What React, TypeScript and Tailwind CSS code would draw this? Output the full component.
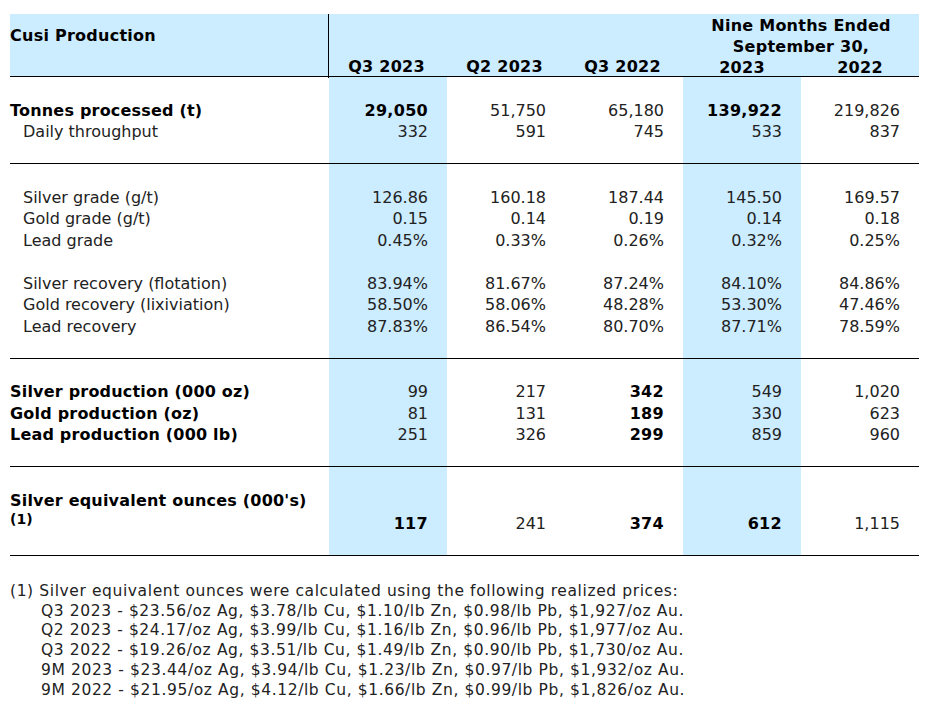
import React from "react";

type Row =
  | { kind: "blank" }
  | {
      kind: "data";
      label: string;
      bold?: boolean;
      indent?: boolean;
      vals: string[];
      boldIdx?: number[];
      note?: boolean;
    };

const B: Row = { kind: "blank" };

const sections: Row[][] = [
  [
    B,
    {
      kind: "data",
      label: "Tonnes processed (t)",
      bold: true,
      vals: ["29,050", "51,750", "65,180", "139,922", "219,826"],
      boldIdx: [0, 3],
    },
    { kind: "data", label: "Daily throughput", indent: true, vals: ["332", "591", "745", "533", "837"] },
    B,
  ],
  [
    B,
    { kind: "data", label: "Silver grade (g/t)", indent: true, vals: ["126.86", "160.18", "187.44", "145.50", "169.57"] },
    { kind: "data", label: "Gold grade (g/t)", indent: true, vals: ["0.15", "0.14", "0.19", "0.14", "0.18"] },
    { kind: "data", label: "Lead grade", indent: true, vals: ["0.45%", "0.33%", "0.26%", "0.32%", "0.25%"] },
    B,
    { kind: "data", label: "Silver recovery (flotation)", indent: true, vals: ["83.94%", "81.67%", "87.24%", "84.10%", "84.86%"] },
    { kind: "data", label: "Gold recovery (lixiviation)", indent: true, vals: ["58.50%", "58.06%", "48.28%", "53.30%", "47.46%"] },
    { kind: "data", label: "Lead recovery", indent: true, vals: ["87.83%", "86.54%", "80.70%", "87.71%", "78.59%"] },
    B,
  ],
  [
    B,
    { kind: "data", label: "Silver production (000 oz)", bold: true, vals: ["99", "217", "342", "549", "1,020"], boldIdx: [2] },
    { kind: "data", label: "Gold production (oz)", bold: true, vals: ["81", "131", "189", "330", "623"], boldIdx: [2] },
    { kind: "data", label: "Lead production (000 lb)", bold: true, vals: ["251", "326", "299", "859", "960"], boldIdx: [2] },
    B,
  ],
  [
    B,
    {
      kind: "data",
      label: "Silver equivalent ounces (000's)",
      bold: true,
      note: true,
      vals: ["117", "241", "374", "612", "1,115"],
      boldIdx: [0, 2, 3],
    },
    B,
  ],
];

const grid = "grid grid-cols-[319px_118px_118px_118px_118px_118px]";

function Cell({ idx, children, className = "" }: { idx: number; children?: React.ReactNode; className?: string }) {
  const blue = idx === 1 || idx === 4 ? "bg-[#ccecff]" : "";
  return <div className={`${blue} ${className}`}>{children}</div>;
}

function RowView({ row }: { row: Row }) {
  if (row.kind === "blank") {
    return (
      <div className={`${grid} h-[21.5px]`}>
        {[0, 1, 2, 3, 4, 5].map((i) => (
          <Cell key={i} idx={i} />
        ))}
      </div>
    );
  }
  return (
    <div className={`${grid} ${row.note ? "h-[45px]" : "h-[21.5px]"}`}>
      <Cell idx={0} className={`${row.indent ? "pl-[13px]" : ""} pt-[1px] whitespace-nowrap`}>
        <div className={`${row.bold ? "font-bold text-black tracking-[0.2px]" : "text-[#222]"}`}>{row.label}</div>
        {row.note && <div className="font-bold text-black text-[14px] leading-[16px]">(1)</div>}
      </Cell>
      {row.vals.map((v, i) => (
        <Cell
          key={i}
          idx={i + 1}
          className={`text-right pr-[19px] whitespace-nowrap ${row.note ? "pt-[24px]" : "pt-[1px]"} ${
            row.boldIdx?.includes(i) ? "font-bold text-black tracking-[0.3px]" : "text-[#222]"
          }`}
        >
          {v}
        </Cell>
      ))}
    </div>
  );
}

export default function App() {
  return (
    <div
      className="w-[925px] h-[711px] bg-white overflow-hidden text-[16px] leading-[21.5px]"
      style={{ fontFamily: '"DejaVu Sans", Verdana, sans-serif' }}
    >
      <div className="ml-[10px] mt-[14px] w-[909px]">
        {/* Header */}
        <div className={`${grid} bg-[#ccecff] h-[63px] border-b border-black font-bold text-black tracking-[0.25px]`}>
          <div className="border-r border-black pt-[11px]">Cusi Production</div>
          <div className="flex items-end justify-center pr-[3px] leading-[20.5px]">Q3 2023</div>
          <div className="flex items-end justify-center pr-[3px] leading-[20.5px]">Q2 2023</div>
          <div className="flex items-end justify-center pr-[3px] leading-[20.5px]">Q3 2022</div>
          <div className="col-span-2 flex flex-col pt-[0.5px] leading-[21px]">
            <div className="text-center">Nine Months Ended</div>
            <div className="text-center">September 30,</div>
            <div className="grid grid-cols-2">
              <div className="text-center">2023</div>
              <div className="text-center">2022</div>
            </div>
          </div>
        </div>
        {sections.map((sec, si) => (
          <div key={si} className="border-b border-black">
            {sec.map((r, ri) => (
              <RowView key={ri} row={r} />
            ))}
          </div>
        ))}
        {/* Footnote */}
        <div className="mt-[26px] text-[15.5px] leading-[19.7px] text-[#222] tracking-[0.6px] whitespace-nowrap">
          <div>(1) Silver equivalent ounces were calculated using the following realized prices:</div>
          <div className="pl-[31px]">
            <div>Q3 2023 - $23.56/oz Ag, $3.78/lb Cu, $1.10/lb Zn, $0.98/lb Pb, $1,927/oz Au.</div>
            <div>Q2 2023 - $24.17/oz Ag, $3.99/lb Cu, $1.16/lb Zn, $0.96/lb Pb, $1,977/oz Au.</div>
            <div>Q3 2022 - $19.26/oz Ag, $3.51/lb Cu, $1.49/lb Zn, $0.90/lb Pb, $1,730/oz Au.</div>
            <div>9M 2023 - $23.44/oz Ag, $3.94/lb Cu, $1.23/lb Zn, $0.97/lb Pb, $1,932/oz Au.</div>
            <div>9M 2022 - $21.95/oz Ag, $4.12/lb Cu, $1.66/lb Zn, $0.99/lb Pb, $1,826/oz Au.</div>
          </div>
        </div>
      </div>
    </div>
  );
}
